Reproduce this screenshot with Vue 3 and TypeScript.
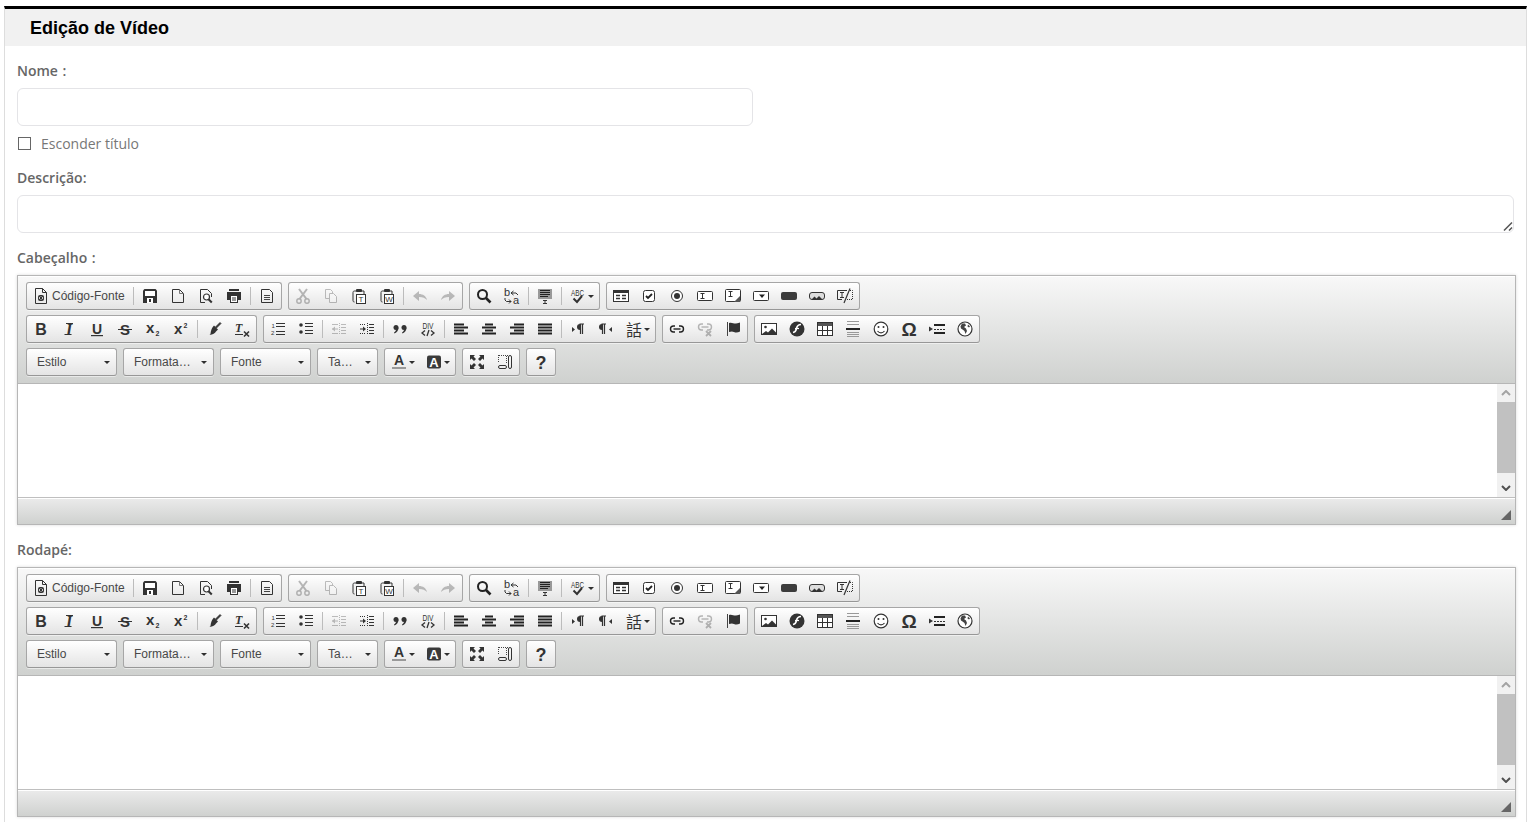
<template>
  <main class="panel">
    <h1 class="panelTitle">Edição de Vídeo</h1>

    <form class="videoForm" @submit.prevent>
      <label class="fieldLabel" for="nome">Nome :</label>
      <input id="nome" class="textInput" type="text" />

      <label class="hideTitle">
        <input class="hideTitleBox" type="checkbox" />
        <span>Esconder título</span>
      </label>

      <label class="fieldLabel fieldLabel--spaced" for="descricao">Descrição:</label>
      <div class="textAreaWrap">
        <textarea id="descricao" class="textArea"></textarea>
        <svg class="textAreaGrip" width="10" height="10" viewBox="0 0 10 10">
          <path d="M1 9.500L9 1.500M6 9.500L9 6.500" stroke="#555" stroke-width="1.500" fill="none" />
        </svg>
      </div>

      <template v-for="title in editors" :key="title">
        <label class="fieldLabel fieldLabel--editor">{{ title }}</label>

        <section class="editor">
          <div class="editorTop">
            <div v-for="(row, r) in toolbar" :key="r" class="toolRow">
              <template v-for="(group, g) in row" :key="g">
                <div v-if="group.combo" class="combo" :style="{ width: group.combo + 'px' }">
                  <span class="comboText">{{ group.text }}</span>
                  <span class="caret"></span>
                </div>
                <div v-else class="toolGroup">
                  <template v-for="(item, i) in group.items" :key="i">
                    <span v-if="item === '|'" class="toolSep"></span>
                    <button
                      v-else
                      type="button"
                      class="toolBtn"
                      :class="{ 'toolBtn--off': off.includes(parse(item).name), 'toolBtn--arrow': parse(item).arrow }"
                    >
                      <svg class="toolIcon" viewBox="0 0 16 16" v-html="icons[parse(item).name]"></svg>
                      <span v-if="parse(item).name === 'source'" class="toolText">Código-Fonte</span>
                      <span v-if="parse(item).arrow" class="caret caret--small"></span>
                    </button>
                  </template>
                </div>
              </template>
            </div>
          </div>

          <div class="editorBody">
            <div class="editArea"></div>
            <div class="scrollBar">
              <span class="scrollBtn">
                <svg width="10" height="6" viewBox="0 0 10 6"><path d="M1 5l4-4 4 4" fill="none" stroke="#a3a3a3" stroke-width="2" /></svg>
              </span>
              <span class="scrollThumb"></span>
              <span class="scrollRest"></span>
              <span class="scrollBtn">
                <svg width="10" height="6" viewBox="0 0 10 6"><path d="M1 1l4 4 4-4" fill="none" stroke="#505050" stroke-width="2" /></svg>
              </span>
            </div>
          </div>

          <div class="editorBottom">
            <span class="resizeGrip"></span>
          </div>
        </section>
      </template>
    </form>
  </main>
</template>

<script setup lang="ts">
interface ToolGroup {
  items?: string[]
  combo?: number
  text?: string
}

const editors = ['Cabeçalho :', 'Rodapé:']

// disabled buttons are drawn at low opacity
const off = ['cut', 'copy', 'undo', 'redo', 'outdent', 'unlink']

// a trailing ">" means the button has a small dropdown arrow
const toolbar: ToolGroup[][] = [
  [
    { items: ['source', '|', 'save', 'newpage', 'preview', 'print', '|', 'templates'] },
    { items: ['cut', 'copy', 'paste', 'word', '|', 'undo', 'redo'] },
    { items: ['find', 'replace', '|', 'selectall', '|', 'spell>'] },
    { items: ['form', 'checkbox', 'radio', 'textfield', 'textarea', 'select', 'button', 'imagebutton', 'hidden'] },
  ],
  [
    { items: ['bold', 'italic', 'underline', 'strike', 'sub', 'sup', '|', 'brush', 'clear'] },
    {
      items: [
        'ol', 'ul', '|', 'outdent', 'indent', '|', 'quote', 'div', '|',
        'left', 'center', 'right', 'justify', '|', 'ltr', 'rtl', 'lang>',
      ],
    },
    { items: ['link', 'unlink', 'anchor'] },
    { items: ['image', 'flash', 'table', 'hr', 'smiley', 'omega', 'pagebreak', 'iframe'] },
  ],
  [
    { combo: 91, text: 'Estilo' },
    { combo: 91, text: 'Formata…' },
    { combo: 91, text: 'Fonte' },
    { combo: 61, text: 'Ta…' },
    { items: ['textcolor>', 'bgcolor>'] },
    { items: ['maximize', 'blocks'] },
    { items: ['help'] },
  ],
]

function parse(item: string) {
  return { name: item.replace('>', ''), arrow: item.endsWith('>') }
}

const line = 'fill="none" stroke="#333" stroke-width="1"'
const label = 'font-family="Liberation Sans, sans-serif" fill="#333"'
const mono = 'font-family="Liberation Sans Narrow, Liberation Sans, sans-serif" fill="#333" lengthAdjust="spacingAndGlyphs"'

const icons: Record<string, string> = {
  source: `<path d="M2.500 .5h7l4 4v11h-11z" ${line}/><path d="M9.500 .5v4h4" ${line}/><rect x="5" y="7" width="6" height="6" rx="2" fill="#333"/><path d="M7.400 8.500L6 10l1.400 1.500M8.600 8.500L10 10l-1.400 1.500" fill="none" stroke="#fff" stroke-width=".8"/>`,
  save: `<path d="M2.500 1h11l1.500 1.500V15H1V2.500z" fill="#333"/><rect x="3" y="3" width="10" height="5" fill="#fff"/><rect x="5" y="10" width="6" height="5" fill="#fff"/><rect x="7" y="11" width="2" height="3" fill="#333"/>`,
  newpage: `<path d="M2.500 1.500h7l4 4v9h-11z" ${line}/><path d="M9.500 1.500v4h4" fill="none" stroke="#777"/>`,
  preview: `<path d="M7 14.500H2.500v-13h7l4 4V9" ${line}/><circle cx="8.500" cy="9" r="3" fill="#fff" stroke="#333" stroke-width="1.200"/><path d="M10.500 11.200l3.300 3.300" stroke="#333" stroke-width="2"/>`,
  print: `<path d="M3 1h10v2H3z" fill="#333"/><path d="M1 4h14v8h-3V7H4v5H1z" fill="#333"/><rect x="4.500" y="7.500" width="7" height="7" fill="#fff" stroke="#333"/><path d="M6 10h4M6 12h4" stroke="#333"/>`,
  templates: `<path d="M2.500 1.500h8l3 3v10h-11z" ${line}/><path d="M5 7.500h6M5 9.500h6M5 11.500h6" stroke="#444"/>`,
  cut: `<path d="M4 1l7.500 10M12 1L4.500 11" stroke="#222" stroke-width="2" fill="none"/><circle cx="4" cy="13" r="2.200" fill="none" stroke="#222" stroke-width="1.400"/><circle cx="12" cy="13" r="2.200" fill="none" stroke="#222" stroke-width="1.400"/>`,
  copy: `<path d="M2.500 1.500h5l2 2v7h-7z" ${line}/><path d="M6.500 5.500h4l3 3v6h-7z" fill="#fff" stroke="#333"/>`,
  paste: `<path d="M3.500 3h9.500v5M3.500 3C2.500 3 2 3.500 2 4.500v8C2 13.500 2.500 14 3.500 14" fill="none" stroke="#333"/><rect x="5" y="1" width="6" height="3" rx="1" fill="#333"/><rect x="5.500" y="6.500" width="9" height="9" fill="#fff" stroke="#333"/><text x="10" y="14" font-size="8" text-anchor="middle" ${label}>T</text>`,
  word: `<path d="M3.500 3h9.500v5M3.500 3C2.500 3 2 3.500 2 4.500v8C2 13.500 2.500 14 3.500 14" fill="none" stroke="#333"/><rect x="5" y="1" width="6" height="3" rx="1" fill="#333"/><rect x="5.500" y="6.500" width="9" height="9" fill="#fff" stroke="#333"/><text x="10" y="14" font-size="8" text-anchor="middle" ${label}>W</text>`,
  undo: `<path d="M1 8l6-5v3c4 0 7 2 8 6-2-2-4-3-8-3v4z" fill="#333"/>`,
  redo: `<path d="M15 8L9 3v3C5 6 2 8 1 12c2-2 4-3 8-3v4z" fill="#333"/>`,
  find: `<circle cx="6.500" cy="6.500" r="4.500" fill="none" stroke="#222" stroke-width="2"/><path d="M10 10l4.500 4.500" stroke="#222" stroke-width="2.600"/>`,
  replace: `<text x="0" y="8" font-size="11" ${label}>b</text><text x="9" y="15.500" font-size="11" ${label}>a</text><path d="M7 5h5l2 2M9.500 3L7 5l2.500 2M1 10v2l1.500 1.500H7M5 11.500l2 2-2 2" fill="none" stroke="#333"/>`,
  selectall: `<rect x="1" y="1" width="14" height="10" fill="#999"/><path d="M3 2.500h10M3 4.500h10M3 6.500h10M3 8.500h8" stroke="#222"/><path d="M6 12.500h4M8 12.500v3M6 15.500h4" stroke="#333"/>`,
  spell: `<text x="1" y="8" font-size="9" textLength="13" ${mono}>ABC</text><path d="M3.500 10.500l3.500 3.500 5-6" fill="none" stroke="#333" stroke-width="2"/>`,
  form: `<rect x=".5" y="2.500" width="15" height="11" fill="#fff" stroke="#333"/><rect x="1" y="3" width="14" height="2" fill="#333"/><path d="M3 7.500h4M3 10.500h4M9 7.500h4M9 10.500h4" stroke="#333" stroke-width="1.400"/>`,
  checkbox: `<rect x="2.500" y="2.500" width="11" height="11" rx="2" fill="#fff" stroke="#333"/><path d="M5 8l2 2 4-4" fill="none" stroke="#222" stroke-width="1.800"/>`,
  radio: `<circle cx="8" cy="8" r="5.500" fill="#fff" stroke="#333"/><circle cx="8" cy="8" r="3" fill="#333"/>`,
  textfield: `<rect x=".5" y="3.500" width="15" height="9" rx="1" fill="#fff" stroke="#333"/><path d="M3.500 5.500h4M5.500 5.500v5M3.500 10.500h4" stroke="#333"/>`,
  textarea: `<rect x=".5" y="1.500" width="15" height="12" rx="1" fill="#fff" stroke="#333"/><path d="M3.500 3.500h4M5.500 3.500v5M3.500 8.500h4" stroke="#333"/><path d="M15 8l-6 6h6z" fill="#555"/>`,
  select: `<rect x=".5" y="3.500" width="15" height="9" rx="1" fill="#fff" stroke="#333"/><path d="M6 6.500h6l-3 3.500z" fill="#222"/>`,
  button: `<rect x="0" y="4" width="16" height="8" rx="2" fill="#3c3c3c"/>`,
  imagebutton: `<rect x=".5" y="4.500" width="15" height="7" rx="2.500" fill="#ddd" stroke="#333"/><path d="M3 11l2.500-2.500 2 2 2.500-2.500 3 3z" fill="#333"/>`,
  hidden: `<path d="M10 2.500H.5v9H5" fill="none" stroke="#333"/><path d="M13 2.500h2.500v9H10" fill="none" stroke="#333" stroke-dasharray="1 1"/><path d="M3 4.500h4M5 4.500v5M3 9.500h4" stroke="#333"/><path d="M13 .5L7 15" stroke="#333" stroke-width="1.200"/>`,
  bold: `<text x="8" y="14" font-size="16" font-weight="700" text-anchor="middle" ${label}>B</text>`,
  italic: `<text x="8" y="14" font-size="16" font-weight="700" font-style="italic" text-anchor="middle" font-family="Liberation Serif, serif" fill="#333">I</text><path d="M5 2.500h7M3.500 13.500h7" stroke="#333"/>`,
  underline: `<text x="8" y="12.500" font-size="14" font-weight="700" text-anchor="middle" ${label}>U</text><rect x="2" y="14" width="12" height="1.200" fill="#333"/>`,
  strike: `<text x="8" y="13.500" font-size="15" font-weight="700" text-anchor="middle" ${label}>S</text><rect x="1" y="8" width="14" height="1" fill="#333"/>`,
  sub: `<text x="1" y="12" font-size="15" font-weight="700" ${label}>x</text><text x="10.500" y="15" font-size="7" font-weight="700" ${label}>2</text>`,
  sup: `<text x="1" y="13" font-size="15" font-weight="700" ${label}>x</text><text x="10.500" y="7" font-size="7" font-weight="700" ${label}>2</text>`,
  brush: `<path d="M9.500 6L14 1.500l1 1L10.500 7z" fill="#333" stroke="#333" stroke-width=".8"/><path d="M8 4.500l4 4-2 2c-1 2-3 3-6.500 3.500 1.500-1 1-2.500 1.500-4 .5-2 1.500-4 3-5.500z" fill="#333"/>`,
  clear: `<text x="1" y="11" font-size="12" font-weight="700" font-style="italic" font-family="Liberation Serif, serif" fill="#333">T</text><rect x="1" y="13" width="8" height="1" fill="#333"/><path d="M10 10.500l5 5M15 10.500l-5 5" stroke="#333" stroke-width="1.600"/>`,
  ol: `<text x="1.500" y="7" font-size="6" ${label}>1</text><text x="1" y="14" font-size="6" ${label}>2</text><path d="M6 2.500h9M6 5.500h9M6 10.500h9M6 13.500h9" stroke="#333" stroke-width="1"/>`,
  ul: `<circle cx="3" cy="4" r="1.800" fill="#333"/><circle cx="3" cy="11" r="1.800" fill="#333"/><path d="M7 2.500h8M7 5.500h8M7 9.500h8M7 12.500h8" stroke="#333" stroke-width="1"/>`,
  outdent: `<path d="M8.500 2v12" stroke="#333" stroke-dasharray="1 1"/><path d="M10 3.500h5M10 6.500h5M10 9.500h5M10 12.500h5M1 8h6M1 3.500h6M1 12.500h6" stroke="#333"/><path d="M1 8l3-2.500v5z" fill="#333"/>`,
  indent: `<path d="M8.500 2v12" stroke="#333" stroke-dasharray="1 1"/><path d="M10 3.500h5M10 6.500h5M10 9.500h5M10 12.500h5M1 8h4" stroke="#333"/><path d="M7 8L4 5.500v5z" fill="#333"/><path d="M1 3.500h5M1 12.500h5" stroke="#333" stroke-dasharray="1 1"/>`,
  quote: `<circle cx="4" cy="6.500" r="2.500" fill="#333"/><path d="M6.500 6.500c0 3-1.500 5-4 6l-.5-1c1.500-1 2-2 2-3z" fill="#333"/><circle cx="12" cy="6.500" r="2.500" fill="#333"/><path d="M14.500 6.500c0 3-1.500 5-4 6l-.5-1c1.500-1 2-2 2-3z" fill="#333"/>`,
  div: `<text x="2.500" y="7.500" font-size="9" textLength="11" ${mono}>DIV</text><path d="M5 10l-3 2.500L5 15M11 10l3 2.500-3 2.500M9 9.500l-2 6" transform="translate(0 -.5)" fill="none" stroke="#333" stroke-width="1.300"/>`,
  left: `<path d="M1 3.500h10M1 6.500h14M1 9.500h10M1 12.500h14" stroke="#222" stroke-width="1.800"/>`,
  center: `<path d="M4 3.500h8M1 6.500h14M4 9.500h8M1 12.500h14" stroke="#222" stroke-width="1.800"/>`,
  right: `<path d="M5 3.500h10M1 6.500h14M5 9.500h10M1 12.500h14" stroke="#222" stroke-width="1.800"/>`,
  justify: `<path d="M1 3.500h14M1 6.500h14M1 9.500h14M1 12.500h14" stroke="#222" stroke-width="1.800"/>`,
  ltr: `<path d="M2 6l3 2.500L2 11z" fill="#333"/><path d="M10 3a3 3 0 0 0 0 6z" fill="#333"/><path d="M9.500 3H14M10.500 3v10M12.500 3v10" stroke="#333" stroke-width="1.200"/>`,
  rtl: `<path d="M14 6l-3 2.500 3 2.500z" fill="#333"/><path d="M4 3a3 3 0 0 0 0 6z" fill="#333"/><path d="M3.500 3H8M4.500 3v10M6.500 3v10" stroke="#333" stroke-width="1.200"/>`,
  lang: `<text x="8" y="14.500" font-size="16" text-anchor="middle" font-family="Noto Sans CJK TC, sans-serif" fill="#333">話</text>`,
  link: `<path d="M6 5H4.500a3 3 0 0 0 0 6H6M10 5h1.500a3 3 0 0 1 0 6H10" fill="none" stroke="#222" stroke-width="1.400"/><path d="M4.500 8h7" stroke="#222" stroke-width="1.400"/>`,
  unlink: `<path d="M6 3H4.500a3 3 0 0 0 0 6H6M10 3h1.500a3 3 0 0 1 0 6H10" fill="none" stroke="#222" stroke-width="1.400"/><path d="M4.500 6h7" stroke="#222" stroke-width="1.400"/><path d="M9 10l5 5M14 10l-5 5" stroke="#222" stroke-width="1.800"/>`,
  anchor: `<path d="M2.500 1v14" stroke="#444"/><path d="M4 2c3-1 5 1 7 .5s3-.5 4-1v9c-2 1-4 1.500-6 .5s-3-.5-5 0z" fill="#333"/>`,
  image: `<rect x=".5" y="2.500" width="15" height="11" fill="#fff" stroke="#333"/><circle cx="4.500" cy="6" r="1.300" fill="#333"/><path d="M1 13l4-3 2 1.500 4-4 4 4V13z" fill="#333"/>`,
  flash: `<circle cx="8" cy="8" r="7.500" fill="#333"/><path d="M12 3.500C9 3.500 8 5 7.500 7.500 7 10 6.500 11 4 11.500" fill="none" stroke="#fff" stroke-width="1.600"/><path d="M6 7.500h4" stroke="#fff" stroke-width="1.200"/>`,
  table: `<rect x=".5" y="1.500" width="15" height="13" fill="#fff" stroke="#333"/><rect x="1" y="2" width="14" height="3" fill="#555"/><path d="M1 9.500h14M5.500 5v9M10.500 5v9" stroke="#333"/>`,
  hr: `<path d="M2 .5h12M2 3.500h12M2 11.500h12M2 13.500h12M2 15.500h12" stroke="#999"/><rect x="1" y="7" width="14" height="2" fill="#222"/>`,
  smiley: `<circle cx="8" cy="8" r="6.800" fill="#fff" stroke="#333" stroke-width="1.200"/><circle cx="5.500" cy="6" r="1" fill="#333"/><circle cx="10.500" cy="6" r="1" fill="#333"/><path d="M4.500 10c2 2.500 5 2.500 7 0" fill="none" stroke="#333" stroke-width="1.200"/>`,
  omega: `<text x="8" y="14.500" font-size="19" font-weight="700" text-anchor="middle" ${label}>Ω</text>`,
  pagebreak: `<path d="M0 5.500l4 2.500-4 2.500z" fill="#333"/><rect x="5" y="3" width="11" height="2" fill="#222"/><path d="M5 8.500h11" stroke="#333" stroke-dasharray="2 1"/><rect x="5" y="11" width="11" height="2" fill="#222"/>`,
  iframe: `<circle cx="8" cy="8" r="7" fill="#fff" stroke="#333" stroke-width="1.200"/><path d="M5 2.500l3 0 1 2-2 1.500 2 1.500 1 2.500-1.500 3-1-3-2-1.500-1.500-1-.5-2zM11 3.500l2 2-1 1-1.500-1z" fill="#444"/>`,
  textcolor: `<text x="8" y="11" font-size="14" font-weight="700" text-anchor="middle" ${label}>A</text><rect x="1" y="13" width="14" height="2" fill="#999"/>`,
  bgcolor: `<rect x="1" y="1.500" width="14" height="13" rx="2" fill="#3a3a3a"/><text x="8" y="13" font-size="13" font-weight="700" text-anchor="middle" font-family="Liberation Sans, sans-serif" fill="#fff">A</text>`,
  maximize: `<path d="M1 1h5L4.500 2.500 7 5 5 7 2.500 4.500 1 6zM15 1v5l-1.500-1.500L11 7 9 5l2.500-2.500L10 1zM1 15v-5l1.500 1.500L5 9l2 2-2.500 2.500L6 15zM15 15h-5l1.500-1.500L9 11l2-2 2.500 2.500L15 10z" fill="#333"/>`,
  blocks: `<path d="M1.500 1v8M11 1.500H2" fill="none" stroke="#444" stroke-dasharray="1 1"/><path d="M9.500 2v8" stroke="#444" stroke-dasharray="1 1"/><rect x="1.500" y="11.500" width="8" height="3" rx="1.500" fill="none" stroke="#333"/><rect x="11.500" y="1.500" width="3" height="13" rx="1.500" fill="none" stroke="#333"/>`,
  help: `<text x="8" y="14.500" font-size="18" font-weight="700" text-anchor="middle" ${label}>?</text>`,
}
</script>

<style>
html,
body {
  margin: 0;
  overflow: hidden;
  background: #fff;
}
</style>

<style scoped>
.panel {
  box-sizing: border-box;
  margin: 6px 5px 0 4px;
  height: 816px;
  border-top: 3px solid #000;
  border-left: 1px solid #ddd;
  border-right: 1px solid #ddd;
  font-family: 'Open Sans', sans-serif;
  font-size: 14px;
  color: #666;
}
.panelTitle {
  margin: 0;
  height: 37px;
  padding-left: 25px;
  background: #f1f1f1;
  color: #000;
  font: 700 18px/38px 'Liberation Sans', Arial, sans-serif;
}
.videoForm {
  display: flex;
  flex-direction: column;
  padding: 15px 10px 0 12px;
}
.fieldLabel {
  display: block;
  height: 20px;
  margin-bottom: 7px;
  font-weight: 600;
  line-height: 20px;
  word-spacing: 1px;
  color: #666;
}
.fieldLabel--spaced {
  margin-top: 15px;
}
.fieldLabel--editor {
  margin-top: 15px;
}
.textInput,
.textArea {
  display: block;
  box-sizing: border-box;
  height: 38px;
  margin: 0;
  padding: 6px 12px;
  border: 1px solid #e4e4e7;
  border-radius: 6px;
  background: #fff;
  outline: none;
  font: inherit;
}
.textInput {
  width: 736px;
}
.textAreaWrap {
  position: relative;
  width: 1497px;
  height: 38px;
}
.textArea {
  width: 100%;
  resize: none;
}
.textAreaGrip {
  position: absolute;
  right: 1px;
  bottom: 2px;
}
.hideTitle {
  display: flex;
  align-items: center;
  height: 20px;
  margin-top: 7px;
  color: #777;
}
.hideTitleBox {
  box-sizing: border-box;
  appearance: none;
  width: 13px;
  height: 13px;
  margin: 0 10px 0 1px;
  border: 1px solid #666;
  background: #fff;
}
.editor {
  width: 1499px;
  height: 250px;
  box-sizing: border-box;
  display: flex;
  flex-direction: column;
  border: 1px solid #b6b6b6;
  box-shadow: 0 0 3px rgba(0, 0, 0, 0.15);
  font-family: 'Liberation Sans', Arial, sans-serif;
  font-size: 12px;
  color: #484848;
}
.editorTop {
  box-sizing: border-box;
  height: 108px;
  padding: 6px 8px 0;
  border-bottom: 1px solid #b6b6b6;
  background: linear-gradient(to bottom, #f8f8f8, #cfd1cf);
  box-shadow: inset 0 1px 0 #fff;
}
.toolRow {
  display: flex;
  gap: 6px;
  height: 28px;
  margin-bottom: 5px;
}
.toolGroup,
.combo {
  box-sizing: border-box;
  height: 28px;
  border: 1px solid #a6a6a6;
  border-bottom-color: #979797;
  border-radius: 3px;
  background: linear-gradient(to bottom, #fff, #e4e4e4);
  box-shadow: 0 1px 0 rgba(255, 255, 255, 0.5);
}
.toolGroup {
  display: flex;
}
.toolBtn {
  display: flex;
  align-items: center;
  height: 26px;
  padding: 0 6px;
  border: 0;
  background: none;
  font: inherit;
  color: inherit;
}
.toolBtn--off .toolIcon {
  opacity: 0.3;
}
.toolBtn--arrow {
  padding-right: 5px;
}
.toolIcon {
  display: block;
  flex: none;
  width: 16px;
  height: 16px;
  overflow: visible;
}
.toolText {
  margin-left: 3px;
  line-height: 26px;
}
.toolSep {
  flex: none;
  width: 1px;
  height: 18px;
  margin: 4px 2px 0;
  background: #bcbcbc;
}
.combo {
  display: flex;
  align-items: center;
  justify-content: space-between;
  padding: 0 6px 0 10px;
}
.comboText {
  line-height: 26px;
}
.caret {
  flex: none;
  width: 0;
  height: 0;
  border-top: 3px solid #2f2f2f;
  border-left: 3px solid transparent;
  border-right: 3px solid transparent;
}
.caret--small {
  margin-left: 2px;
}
.editorBody {
  display: flex;
  height: 113px;
  background: #fff;
}
.editArea {
  flex: 1;
}
.scrollBar {
  display: flex;
  flex-direction: column;
  width: 18px;
  background: #f1f1f1;
}
.scrollBtn {
  display: flex;
  flex: none;
  align-items: center;
  justify-content: center;
  height: 18px;
}
.scrollThumb {
  flex: none;
  height: 71px;
  background: #c1c1c1;
}
.scrollRest {
  flex: 1;
}
.editorBottom {
  position: relative;
  flex: 1;
  border-top: 1px solid #bfbfbf;
  background: linear-gradient(to bottom, #ebebeb, #cfd1cf);
  box-shadow: inset 0 1px 0 #fff;
}
.resizeGrip {
  position: absolute;
  right: 4px;
  bottom: 4px;
  width: 0;
  height: 0;
  border-bottom: 10px solid #666;
  border-left: 10px solid transparent;
}
</style>
